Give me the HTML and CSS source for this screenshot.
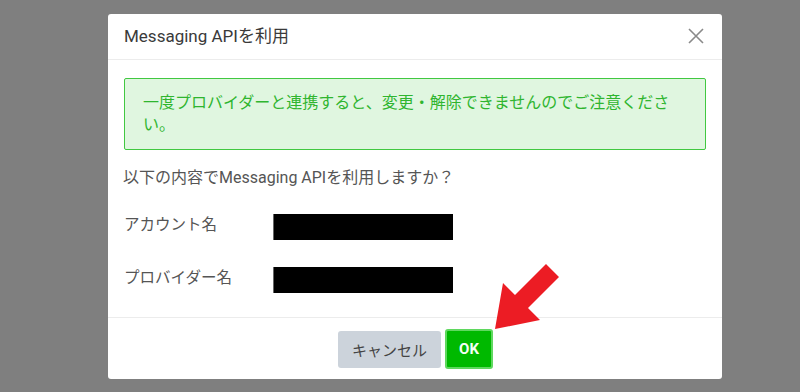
FILE: index.html
```html
<!DOCTYPE html>
<html lang="ja">
<head>
  <meta charset="utf-8">
  <title>Messaging APIを利用</title>
  <link rel="stylesheet" href="styles.css">
</head>
<body>

<div class="modal">
  <div class="modal-header">
    <div class="modal-title">Messaging APIを利用</div>
    <svg class="close" width="16" height="16" viewBox="0 0 16 16">
      <path d="M1 1 L15 15 M15 1 L1 15" stroke="#8a8a8a" stroke-width="1.6" fill="none"/>
    </svg>
  </div>

  <div class="modal-body">
    <div class="alert">一度プロバイダーと連携すると、変更・解除できませんのでご注意ください。</div>
    <p class="question">以下の内容でMessaging APIを利用しますか？</p>

    <div class="info-row first">
      <div class="label">アカウント名</div>
      <div class="masked"></div>
    </div>
    <div class="info-row">
      <div class="label">プロバイダー名</div>
      <div class="masked"></div>
    </div>
  </div>

  <div class="modal-footer">
    <button class="btn btn-cancel">キャンセル</button>
    <button class="btn btn-ok">OK</button>
  </div>
</div>

<!-- red arrow pointing at the OK button -->
<svg class="arrow" width="80" height="80" viewBox="0 0 80 80">
  <polygon points="2,67 10,21 22,33 53,2 66,15 35,46 47,58" fill="#ec1c24"/>
</svg>

</body>
</html>
```

FILE: styles.css
```css
body{
  margin: 0;
  height: 392px;
  background-color: #7f7f7f;
  font-family: Roboto, "Noto Sans CJK JP", sans-serif;
  overflow: hidden;
  position: relative;
}

.modal{
  width: 614px;
  height: 365px;
  margin: 14px 0 0 108px;
  background-color: #fff;
  border-radius: 3px;
  display: flex;
  flex-direction: column;
}

.modal-header{
  height: 46px;
  box-sizing: border-box;
  padding: 0 18px 2px 16px;
  border-bottom: 1px solid #ececec;
  display: flex;
  align-items: center;
  justify-content: space-between;
}

.modal-title{
  font-size: 17px;
  line-height: 22px;
  color: #3a3a3a;
}

.modal-body{
  flex: 1;
  padding: 18px 16px 0 16px;
}

.alert{
  height: 72px;
  box-sizing: border-box;
  border: 1px solid #41c841;
  border-radius: 2px;
  background-color: #e0f6e0;
  color: #2fb52f;
  font-size: 16px;
  line-height: 22px;
  padding: 13px 19px 0 18px;
}

.question{
  margin: 17px 0 0 -1px;
  font-size: 16px;
  line-height: 22px;
  color: #555;
}

.info-row{
  display: flex;
  align-items: center;
  margin-top: 27px;
}

.info-row.first{
  margin-top: 25px;
}

.label{
  width: 149px;
  font-size: 15.5px;
  line-height: 22px;
  color: #555;
  margin-top: -5px;
}

.masked{
  width: 180px;
  height: 26px;
  background-color: #000;
  border-left: 1px solid #666;
  box-sizing: border-box;
}

.modal-footer{
  height: 62px;
  box-sizing: border-box;
  border-top: 1px solid #ececec;
  display: flex;
  justify-content: center;
  align-items: flex-start;
  gap: 4px;
  padding-top: 11px;
  padding-left: 1px;
}

.btn{
  font-family: Roboto, "Noto Sans CJK JP", sans-serif;
  font-size: 15px;
  border-radius: 3px;
  cursor: pointer;
}

.btn-cancel{
  width: 103px;
  height: 37px;
  margin-top: 2px;
  border: none;
  background-color: #ccd3db;
  color: #444;
}

.btn-ok{
  width: 48px;
  height: 40px;
  border: 2px solid #5fd85f;
  background-color: #00b900;
  color: #f4fff4;
  font-weight: bold;
}

.arrow{
  position: absolute;
  left: 493px;
  top: 262px;
}
```
